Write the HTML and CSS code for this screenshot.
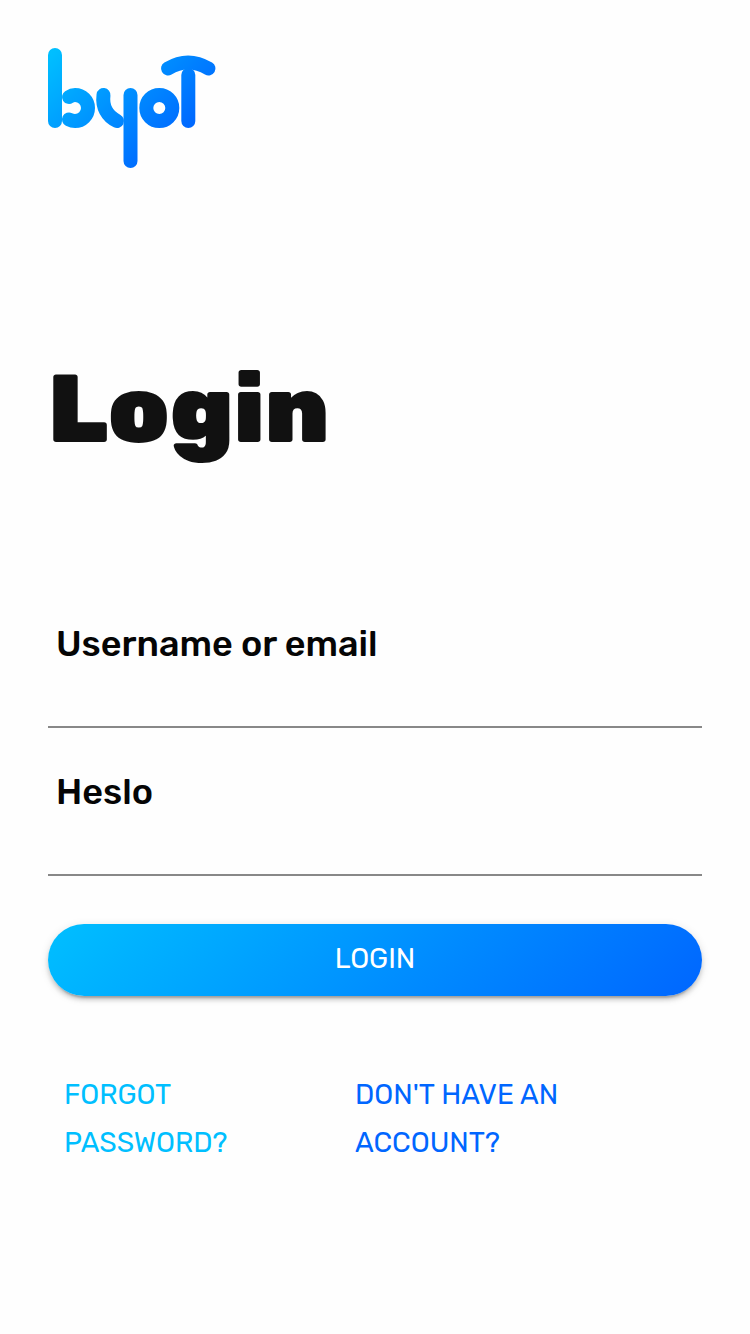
FILE: index.html
```html
<!DOCTYPE html>
<html lang="en">
<head>
<meta charset="utf-8">
<title>byot – Login</title>
<link rel="stylesheet" href="styles.css">
</head>
<body>
<main class="page">
  <svg class="logo" viewBox="0 0 168 120" role="img" aria-label="byot">
    <defs>
      <linearGradient id="brand" gradientUnits="userSpaceOnUse" x1="4" y1="4" x2="113" y2="113">
        <stop offset="0" stop-color="#00bfff"/>
        <stop offset="1" stop-color="#0066ff"/>
      </linearGradient>
    </defs>
    <g fill="none" stroke="url(#brand)" stroke-width="14" stroke-linecap="round">
      <path d="M7 7V73.001"/>
      <path d="M21 49Q24 47 27 47A13 13 0 0 1 27 73Q24 73 21 71.500"/>
      <path d="M55.500 47C54 59 59 68 69 73"/>
      <path d="M82.500 47V113.001"/>
      <circle cx="111.300" cy="60" r="13"/>
      <path d="M140.300 27V73"/>
      <path d="M120 20.500Q140 8.500 160.500 20.500"/>
    </g>
  </svg>
  <h1 class="title">Login</h1>
  <form class="form">
    <div class="field">
      <label class="label" for="user">Username or email</label>
      <input class="input" id="user" type="text">
    </div>
    <div class="field">
      <label class="label" for="pass">Heslo</label>
      <input class="input" id="pass" type="password">
    </div>
    <button class="submit" type="button">LOGIN</button>
  </form>
  <nav class="links">
    <a class="link link-forgot">FORGOT<br>PASSWORD?</a>
    <a class="link link-signup">DON'T HAVE AN<br>ACCOUNT?</a>
  </nav>
</main>
</body>
</html>
```
FILE: styles.css
```css
* { box-sizing: border-box; }
body {
  margin: 0;
  background: #fefefe;
  font-family: Rubik, Roboto, sans-serif;
}
.page {
  height: 1334px;
  padding: 48px 48px 0;
  overflow: hidden;
}
.logo {
  display: block;
  width: 168px;
  height: 120px;
  overflow: visible;
}
.title {
  margin: 181px 0 0;
  height: 120px;
  font: 900 96px/120px Rubik, Inter, sans-serif;
  color: #111;
}
.form {
  margin-top: 111px;
  display: flex;
  flex-direction: column;
}
.field {
  height: 148px;
  display: flex;
  flex-direction: column;
  border-bottom: 2px solid #888;
  padding-top: 42px;
}
.label {
  padding-left: 8px;
  font-size: 36px;
  line-height: 44px;
  font-weight: 500;
  color: #050505;
}
.input {
  height: 60px;
  width: 100%;
  border: 0;
  outline: 0;
  padding: 0 8px;
  background: transparent;
  font: inherit;
}
.submit {
  height: 72px;
  margin-top: 48px;
  padding: 0 0 2px;
  border: 0;
  border-radius: 36px;
  background: linear-gradient(135deg, #00bfff, #0066ff);
  box-shadow: 0 6px 2px -4px rgba(0, 0, 0, .2), 0 4px 4px rgba(0, 0, 0, .14), 0 2px 10px rgba(0, 0, 0, .12);
  color: #fff;
  font: 400 28px/48px Rubik, Roboto, sans-serif;
}
.links {
  display: grid;
  grid-template-columns: 291px 1fr;
  margin-top: 75px;
  padding-left: 16px;
}
.link {
  font-size: 28px;
  line-height: 48px;
}
.link-forgot { color: #00bfff; }
.link-signup { color: #0066ff; }
```
